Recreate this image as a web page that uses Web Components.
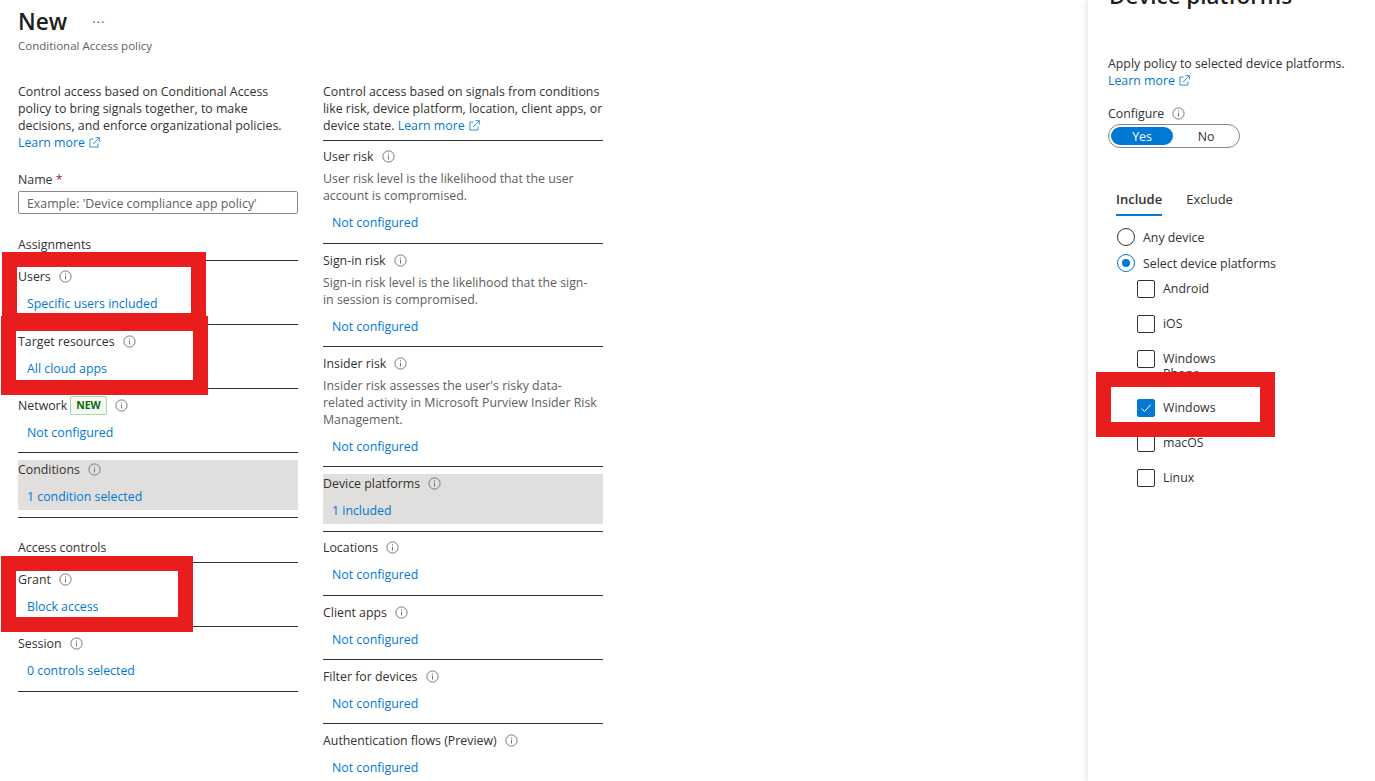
<!DOCTYPE html>
<html><head><meta charset="utf-8"><style>
html,body{margin:0;padding:0;background:#fff;height:100%;overflow:hidden}
body{font:12.35px/17px "Open Sans",sans-serif;color:#323130}
</style></head><body>
<policy-page>
  <policy-header slot="header" heading="New" sub="Conditional Access policy"></policy-header>

  <div slot="col1">
    <policy-text lines="4">Control access based on Conditional Access<br>policy to bring signals together, to make<br>decisions, and enforce organizational policies.<br><learn-more></learn-more></policy-text>
    <name-field></name-field>
    <policy-section heading="Assignments" style="--head-gap:7px;margin-top:22px">
      <policy-row tight value="Specific users included">Users</policy-row>
      <policy-row value="All cloud apps">Target resources</policy-row>
      <policy-row value="Not configured">Network<new-badge></new-badge></policy-row>
      <policy-row value="1 condition selected" active>Conditions</policy-row>
    </policy-section>
    <policy-section heading="Access controls" style="--head-gap:6px">
      <policy-row value="Block access">Grant</policy-row>
      <policy-row value="0 controls selected" style="padding-bottom:12px">Session</policy-row>
    </policy-section>
  </div>

  <div slot="col2">
    <policy-text>Control access based on signals from conditions<br>like risk, device platform, location, client apps, or<br>device state. <learn-more></learn-more></policy-text>
    <policy-section flush>
      <policy-row tight value="Not configured">User risk<span slot="desc">User risk level is the likelihood that the user<br>account is compromised.</span></policy-row>
      <policy-row value="Not configured">Sign-in risk<span slot="desc">Sign-in risk level is the likelihood that the sign-<br>in session is compromised.</span></policy-row>
      <policy-row value="Not configured">Insider risk<span slot="desc">Insider risk assesses the user's risky data-<br>related activity in Microsoft Purview Insider Risk<br>Management.</span></policy-row>
      <policy-row value="1 included" active>Device platforms</policy-row>
      <policy-row tight value="Not configured">Locations</policy-row>
      <policy-row value="Not configured">Client apps</policy-row>
      <policy-row value="Not configured">Filter for devices</policy-row>
      <policy-row value="Not configured">Authentication flows (Preview)</policy-row>
    </policy-section>
  </div>

  <platform-panel slot="panel"></platform-panel>

  <red-box slot="marks" style="left:2px;top:252px;width:204px;height:76px"></red-box>
  <red-box slot="marks" style="left:1px;top:316px;width:207px;height:79px"></red-box>
  <red-box slot="marks" style="left:1px;top:556px;width:192px;height:76px"></red-box>
  <red-box slot="marks" style="left:1096px;top:372px;width:179px;height:65px"></red-box>
</policy-page>

<script>
const INFO = `<svg class="info" width="13" height="13" viewBox="0 0 13 13"><circle cx="6.5" cy="6.5" r="5.6" fill="none" stroke="#7a7876"/><rect x="6" y="5.6" width="1" height="3.9" fill="#7a7876"/><rect x="6" y="3.4" width="1" height="1.1" fill="#7a7876"/></svg>`

class PolicyPage extends HTMLElement {
  constructor() {
    super()
    this.attachShadow({ mode: 'open' }).innerHTML = `<style>
      :host{display:flex;width:1375px;height:781px;overflow:hidden;position:relative}
      .main{flex:1;padding:0 0 0 18px;min-width:0}
      .cols{display:flex;gap:25px;margin-top:28px}
      .cols ::slotted(div){width:280px;flex:none}
    </style>
    <div class="main"><slot name="header"></slot>
      <div class="cols"><slot name="col1"></slot><slot name="col2"></slot></div></div>
    <slot name="panel"></slot><slot name="marks"></slot>`
  }
}
customElements.define('policy-page', PolicyPage)

class PolicyHeader extends HTMLElement {
  constructor() {
    super()
    this.attachShadow({ mode: 'open' }).innerHTML = `<style>
      :host{display:block;padding-top:6px}
      .top{display:flex;align-items:center;height:32px}
      h1{margin:0;font-size:22.6px;font-weight:600;line-height:32px;color:#201f1e}
      .more{margin-left:25px;color:#605e5c;font-size:13px;letter-spacing:1px;line-height:10px}
      .sub{font-size:11.5px;line-height:16px;color:#605e5c}
    </style>
    <div class="top"><h1>${this.getAttribute('heading')}</h1><span class="more">···</span></div>
    <div class="sub">${this.getAttribute('sub')}</div>`
  }
}
customElements.define('policy-header', PolicyHeader)

class PolicyText extends HTMLElement {
  constructor() {
    super()
    this.attachShadow({ mode: 'open' }).innerHTML = `<style>
      :host{display:block;line-height:17px;white-space:nowrap;padding-top:1px}
    </style><slot></slot>`
  }
}
customElements.define('policy-text', PolicyText)

class LearnMore extends HTMLElement {
  constructor() {
    super()
    this.attachShadow({ mode: 'open' }).innerHTML = `<style>
      :host{display:inline-flex;align-items:center;gap:4px;color:#0078d4}
    </style>Learn more<svg width="11" height="11" viewBox="0 0 11 11" fill="none" stroke="#0078d4" stroke-width=".8"><path d="M4.5 2H.9v8.1H9V6.5"/><path d="M4 7 10 1M6.6.6h3.8v3.8"/></svg>`
  }
}
customElements.define('learn-more', LearnMore)

class NameField extends HTMLElement {
  constructor() {
    super()
    this.attachShadow({ mode: 'open' }).innerHTML = `<style>
      :host{display:block;margin-top:20px}
      .star{color:#a4262c}
      .box{box-sizing:border-box;height:23px;margin-top:3px;border:1px solid #8a8886;border-radius:2px;padding:0 8px;color:#605e5c;line-height:23px;white-space:nowrap}
    </style><div>Name <span class="star">*</span></div><div class="box">Example: 'Device compliance app policy'</div>`
  }
}
customElements.define('name-field', NameField)

class PolicySection extends HTMLElement {
  constructor() {
    super()
    const heading = this.getAttribute('heading')
    this.attachShadow({ mode: 'open' }).innerHTML = `<style>
      :host{display:block;margin-top:21px;border-bottom:1px solid #323130}
      :host([flush]){margin-top:6px;border-bottom:0}
      .h{line-height:17px;margin-bottom:var(--head-gap,8px)}
    </style>${heading ? `<div class="h">${heading}</div>` : ''}<slot></slot>`
  }
}
customElements.define('policy-section', PolicySection)

class PolicyRow extends HTMLElement {
  constructor() {
    super()
    this.attachShadow({ mode: 'open' }).innerHTML = `<style>
      :host{display:block;border-top:1px solid #323130;padding:7px 0 11px}
      :host([tight]){padding-bottom:12px}
      :host([tight]) .in{padding-top:0}
      :host([active]){padding-bottom:7px}
      .in{padding-top:1px}
      :host([active]) .in{background:#e1dfdd;padding-bottom:5px}
      .t{display:flex;align-items:center;line-height:17px;height:17px;white-space:nowrap}
      .info{flex:none;margin-left:8px}
      .d{color:#605e5c;line-height:17px;white-space:nowrap}
      .d ::slotted(*){display:block;margin-top:5px}
      a{display:block;color:#0078d4;margin:10px 0 0 9px;line-height:17px}
    </style><div class="in"><div class="t"><slot></slot>${INFO}</div>
    <div class="d"><slot name="desc"></slot></div><a>${this.getAttribute('value')}</a></div>`
  }
}
customElements.define('policy-row', PolicyRow)

class NewBadge extends HTMLElement {
  constructor() {
    super()
    this.attachShadow({ mode: 'open' }).innerHTML = `<style>
      :host{display:inline-block;box-sizing:border-box;height:19px;margin-left:3px;padding:0 5px;border:1px solid #a3dba3;border-radius:2px;background:#f3fbf3;color:#0b6a0b;font-size:10.5px;font-weight:700;line-height:17px}
    </style>NEW`
  }
}
customElements.define('new-badge', NewBadge)

class RedBox extends HTMLElement {
  constructor() {
    super()
    this.attachShadow({ mode: 'open' }).innerHTML = `<style>
      :host{display:block;position:absolute;box-sizing:border-box;border:15px solid #e81d1d}
    </style>`
  }
}
customElements.define('red-box', RedBox)

class PlatformCheck extends HTMLElement {
  constructor() {
    super()
    const on = this.hasAttribute('checked')
    this.attachShadow({ mode: 'open' }).innerHTML = `<style>
      :host{display:flex;gap:8px;height:18px;margin-bottom:17px;padding-left:20px;line-height:18px}
      :host([wrap]){height:32px;line-height:15px}
      :host([wrap]) .l{padding-top:1px}
      .b{box-sizing:border-box;flex:none;width:18px;height:18px;border:1px solid #323130;border-radius:2px;display:flex;align-items:center;justify-content:center}
      :host([checked]) .b{background:#0078d4;border-color:#0078d4}
      .l{width:70px;white-space:normal}
    </style><span class="b">${on ? `<svg width="12" height="12" viewBox="0 0 12 12" fill="none" stroke="#fff" stroke-width="1"><path d="M1.5 6.5 4.5 9.5 10.8 2.6"/></svg>` : ''}</span><span class="l"><slot></slot></span>`
  }
}
customElements.define('platform-check', PlatformCheck)

class PlatformRadio extends HTMLElement {
  constructor() {
    super()
    this.attachShadow({ mode: 'open' }).innerHTML = `<style>
      :host{display:flex;align-items:center;gap:8px;height:18px;margin-bottom:8px;white-space:nowrap}
      .c{box-sizing:border-box;width:18px;height:18px;border:1px solid #323130;border-radius:50%;display:flex;align-items:center;justify-content:center}
      :host([checked]) .c{border-color:#0078d4}
      :host([checked]) .c::after{content:"";width:8px;height:8px;border-radius:50%;background:#0078d4}
    </style><span class="c"></span><slot></slot>`
  }
}
customElements.define('platform-radio', PlatformRadio)

class PlatformPanel extends HTMLElement {
  constructor() {
    super()
    this.attachShadow({ mode: 'open' }).innerHTML = `<style>
      :host{display:block;flex:none;box-sizing:border-box;width:287px;height:781px;padding-left:21px;background:#fff;box-shadow:0 0 8px rgba(0,0,0,.16);white-space:nowrap}
      h2{margin:-20px 0 0;font-size:22.4px;font-weight:600;line-height:32px;color:#201f1e}
      .intro{margin-top:43px;margin-left:-1px}
      .cfg{display:flex;align-items:center;gap:8px;margin:16px 0 0 -1px;height:17px}
      .toggle{box-sizing:border-box;display:flex;align-items:center;width:132px;height:24px;margin:2px 0 0 -1px;padding:0 2px;border:1px solid #8a8886;border-radius:12px}
      .yes{width:62px;height:18px;line-height:19px;border-radius:9px;background:#0078d4;color:#fff;text-align:center}
      .no{flex:1;text-align:center;padding-left:2px;line-height:19px}
      .tabs{display:flex;gap:24px;margin:43px 0 0 7px;font-size:13px}
      .tab{box-sizing:border-box;height:25px;line-height:17px}
      .tab.on{font-weight:600;border-bottom:2px solid #0078d4}
      .list{margin:12px 0 0 8px}
    </style>
    <h2>Device platforms</h2>
    <div class="intro">Apply policy to selected device platforms.<br><learn-more></learn-more></div>
    <div class="cfg">Configure ${INFO}</div>
    <div class="toggle"><span class="yes">Yes</span><span class="no">No</span></div>
    <div class="tabs"><span class="tab on">Include</span><span class="tab">Exclude</span></div>
    <div class="list">
      <platform-radio>Any device</platform-radio>
      <platform-radio checked>Select device platforms</platform-radio>
      <platform-check>Android</platform-check>
      <platform-check>iOS</platform-check>
      <platform-check wrap>Windows Phone</platform-check>
      <platform-check checked>Windows</platform-check>
      <platform-check>macOS</platform-check>
      <platform-check>Linux</platform-check>
    </div>`
  }
}
customElements.define('platform-panel', PlatformPanel)
</script>
</body></html>
